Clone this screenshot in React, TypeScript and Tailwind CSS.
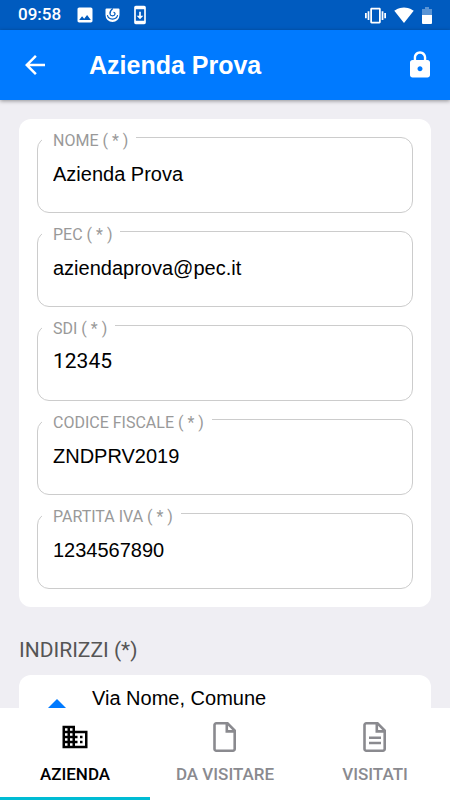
import React, { useState } from 'react';
import clsx from 'clsx';
import {
  MdArrowBack,
  MdDomain,
  MdImage,
  MdLock,
  MdSignalWifi4Bar,
  MdSystemUpdate,
  MdVibration,
} from 'react-icons/md';

interface Field {
  id: string;
  label: string;
  value: string;
  roboto?: boolean;
}

const initialFields: Field[] = [
  { id: 'nome', label: 'NOME ( * )', value: 'Azienda Prova' },
  { id: 'pec', label: 'PEC ( * )', value: 'aziendaprova@pec.it' },
  { id: 'sdi', label: 'SDI ( * )', value: '12345', roboto: true },
  { id: 'codiceFiscale', label: 'CODICE FISCALE ( * )', value: 'ZNDPRV2019' },
  { id: 'partitaIva', label: 'PARTITA IVA ( * )', value: '1234567890' },
];

const FileIcon = ({ lines }: { lines?: boolean }) => (
  <svg width="24" height="30" viewBox="0 0 24 30" fill="none" stroke="currentColor" strokeWidth="2.6">
    <path d="M3.200 1.300h11.300l7.200 7.200V27a1.700 1.700 0 0 1-1.700 1.700H3.200A1.700 1.700 0 0 1 1.500 27V3A1.700 1.700 0 0 1 3.200 1.300z" />
    <path d="M13.800 1.500v7.900h8" />
    {lines && <path d="M6 15.700h12M6 21h12" />}
  </svg>
);

const SwirlIcon = () => (
  <svg width="15" height="15" viewBox="0 0 15 15" fill="none">
    <path fill="currentColor" d="M1.500.5h12a1 1 0 0 1 1 1V7a7 7 0 0 1-14 0V1.500a1 1 0 0 1 1-1z" />
    <path d="M7.800.5C5.600 2.200 4.600 4 5 6c.4 2.400 4.500 2.500 5 .2.200-1-.6-1.900-1.500-1.700" stroke="#005bbf" strokeWidth="1.200" />
    <path d="M2.400 7.200c1 5.200 9.200 5.200 10.200 0" stroke="#005bbf" strokeWidth="1.100" />
  </svg>
);

const BatteryIcon = () => (
  <svg width="10" height="17" viewBox="0 0 10 17" fill="currentColor">
    <path d="M3 0h4v2h3v6H0V2h3z" opacity=".35" />
    <path d="M0 8h10v8a1 1 0 0 1-1 1H1a1 1 0 0 1-1-1z" />
  </svg>
);

const StatusBar = () => (
  <div className="flex h-[30px] shrink-0 items-center justify-between bg-[#005bbf] px-[18px] text-white">
    <div className="flex items-center">
      <span className="mr-3.5 text-[17px] font-medium">09:58</span>
      <MdImage size={20} />
      <span className="mx-2.5">
        <SwirlIcon />
      </span>
      <MdSystemUpdate size={20} />
    </div>
    <div className="flex items-center gap-2">
      <MdVibration size={21} />
      <MdSignalWifi4Bar size={20} />
      <BatteryIcon />
    </div>
  </div>
);

const tabs = [
  { id: 'azienda', label: 'AZIENDA', icon: <MdDomain size={30} /> },
  { id: 'daVisitare', label: 'DA VISITARE', icon: <FileIcon /> },
  { id: 'visitati', label: 'VISITATI', icon: <FileIcon lines /> },
];

const App: React.FC = () => {
  const [fields, setFields] = useState(initialFields);
  const [activeTab, setActiveTab] = useState('azienda');

  const handleChange = (id: string, value: string) => {
    setFields(fields.map((f) => (f.id === id ? { ...f, value } : f)));
  };

  return (
    <div className="flex h-screen flex-col bg-[#efeef3] font-[Roboto,sans-serif]">
      <StatusBar />

      {/* Header */}
      <header className="z-10 flex h-[70px] shrink-0 items-center bg-[#007aff] px-5 text-white shadow-[0_1px_4px_rgba(0,0,0,0.4)]">
        <button type="button" aria-label="Indietro">
          <MdArrowBack size={30} />
        </button>
        <h1 className="ml-[39px] flex-1 font-['Liberation_Sans',sans-serif] text-[25px] leading-10 font-bold">
          Azienda Prova
        </h1>
        <button type="button" aria-label="Blocca" className="-mr-[5px]">
          <MdLock size={30} />
        </button>
      </header>

      <main className="min-h-0 flex-1 overflow-y-auto px-[19px] pt-[19px] [scrollbar-width:none]">
        {/* Company data */}
        <section className="flex flex-col gap-[18px] rounded-xl bg-white p-[18px]">
          {fields.map((field) => (
            <div key={field.id} className="relative h-[76px] rounded-xl border border-[#cccccc]">
              <label
                htmlFor={field.id}
                className="absolute -top-[7px] left-1 bg-white pr-2 pl-[11px] text-base leading-5 text-[#999999]"
              >
                {field.label}
              </label>
              <input
                id={field.id}
                type="text"
                value={field.value}
                onChange={(e) => handleChange(field.id, e.target.value)}
                className={clsx(
                  'mt-[22px] block h-7 w-full bg-transparent px-[15px] text-black outline-none',
                  field.roboto
                    ? 'text-[21px]'
                    : "font-['Liberation_Sans',sans-serif] text-xl"
                )}
              />
            </div>
          ))}
        </section>

        {/* Addresses */}
        <h2 className="mt-[29px] text-[21px] leading-7 text-[#555555]">INDIRIZZI (*)</h2>
        <section className="mt-[11px] flex rounded-xl bg-white px-7 py-[13px]">
          <svg className="mt-[11px] mr-[25px]" width="20" height="10" viewBox="0 0 20 10" fill="#007aff">
            <path d="M10 0l10 10H0z" />
          </svg>
          <p className="font-['Liberation_Sans',sans-serif] text-xl leading-5 text-black">
            Via Nome, Comune
          </p>
        </section>
      </main>

      {/* Bottom tabs */}
      <nav className="grid h-[92px] shrink-0 grid-cols-3 bg-white">
        {tabs.map((tab) => (
          <button
            key={tab.id}
            type="button"
            onClick={() => setActiveTab(tab.id)}
            className={clsx(
              'flex flex-col items-center border-b-[3px] pt-3.5 text-[17px] leading-6 font-medium',
              activeTab === tab.id
                ? 'border-[#00bcd4] text-black'
                : 'border-transparent text-[#8a8a8f]'
            )}
          >
            <span className="flex h-[30px] items-center">{tab.icon}</span>
            <span className="mt-2.5">{tab.label}</span>
          </button>
        ))}
      </nav>
    </div>
  );
};

export default App;
